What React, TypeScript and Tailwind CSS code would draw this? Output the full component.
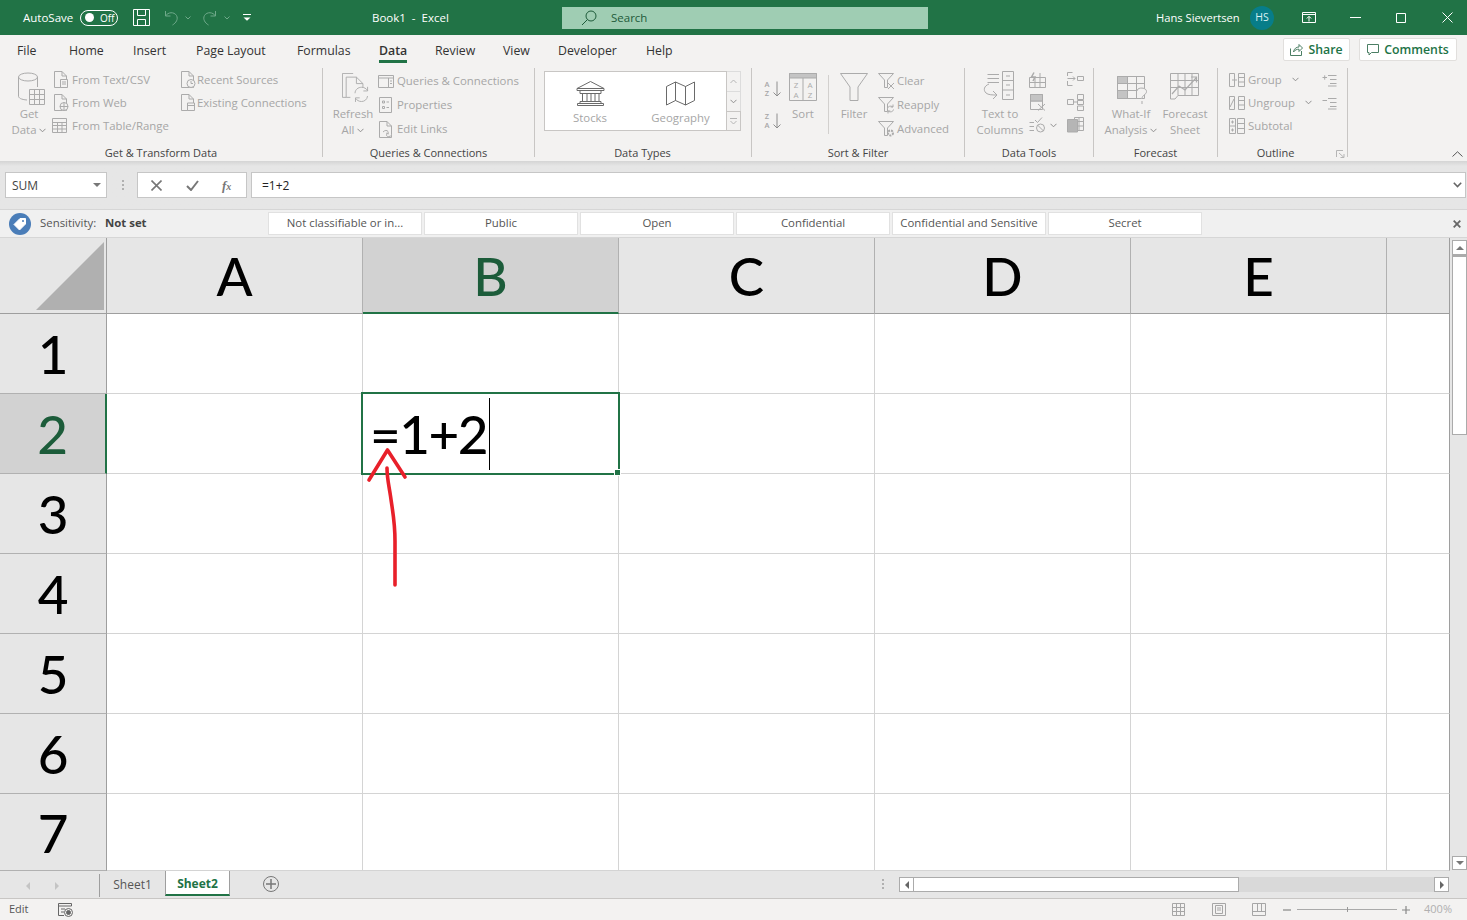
import type { ReactNode } from "react";

const columns = ["A", "B", "C", "D", "E"];
const rows = [1, 2, 3, 4, 5, 6, 7];
const sensitivity = ["Not classifiable or in...", "Public", "Open", "Confidential", "Confidential and Sensitive", "Secret"];
const tabs = [
  { name: "File", w: "w-[52px]" },
  { name: "Home", w: "w-[64px]" },
  { name: "Insert", w: "w-[63px]" },
  { name: "Page Layout", w: "w-[101px]" },
  { name: "Formulas", w: "w-[82px]" },
  { name: "Data", w: "w-[56px]", active: true },
  { name: "Review", w: "w-[68px]" },
  { name: "View", w: "w-[55px]" },
  { name: "Developer", w: "w-[88px]" },
  { name: "Help", w: "w-[50px]" },
];

function Svg({ w, h, className = "", children }: { w: number; h: number; className?: string; children: ReactNode }) {
  return (
    <svg width={w} height={h} viewBox={`0 0 ${w} ${h}`} fill="none" stroke="currentColor" strokeWidth="1" className={`shrink-0 ${className}`}>
      {children}
    </svg>
  );
}

const page = "M1.5 .5H9L13.5 5V16.5H1.5ZM9 .5V5H13.5";

function DocIcon({ children }: { children?: ReactNode }) {
  return (
    <Svg w={17} h={17}>
      <path d={page} />
      {children}
    </Svg>
  );
}

function FunnelSmall({ children }: { children?: ReactNode }) {
  return (
    <Svg w={18} h={18}>
      <path d="M.5 1.5H15.5L9.5 8V15.5H6.5V8Z" />
      {children}
    </Svg>
  );
}

function Big({ w, label, sub, chevron, children }: { w: string; label: string; sub?: string; chevron?: boolean; children: ReactNode }) {
  return (
    <div className={`${w} shrink-0 flex flex-col items-center text-[#a6a6a6]`}>
      <div className="h-[38px] w-full flex items-end justify-center text-[#ababab]">{children}</div>
      <div className="text-[11.4px] leading-[16px] whitespace-nowrap">{label}</div>
      {sub && (
        <div className="text-[11.4px] leading-[16px] whitespace-nowrap flex items-center gap-[3px]">
          {sub}
          {chevron && <Chevron />}
        </div>
      )}
    </div>
  );
}

function Chevron() {
  return (
    <Svg w={7} h={5} className="text-[#8f8f8f]">
      <path d="M.5 .8L3.5 3.8L6.5 .8" />
    </Svg>
  );
}

function Small({ icon, label, h, iconW = "w-[19px]" }: { icon: ReactNode; label: string; h: string; iconW?: string }) {
  return (
    <div className={`${h} flex items-center text-[#a6a6a6] whitespace-nowrap`}>
      <div className={`${iconW} shrink-0 text-[#ababab]`}>{icon}</div>
      <span className="text-[11.4px]">{label}</span>
    </div>
  );
}

function Group({ w, label, labelPad = "", children }: { w: string; label: string; labelPad?: string; children: ReactNode }) {
  return (
    <div className={`${w} h-[89px] shrink-0 border-r border-[#c8c6c4]`}>
      <div className="h-[77px] flex">{children}</div>
      <div className={`h-[12px] text-center text-[11px] leading-[16px] text-[#444] whitespace-nowrap ${labelPad}`}>{label}</div>
    </div>
  );
}

function TitleBar() {
  return (
    <div className="h-[35px] shrink-0 bg-[#217346] text-white flex items-center">
      <span className="ml-[23px] w-[57px] text-[11.5px]">AutoSave</span>
      <div className="w-[38px] h-[16px] rounded-full border border-white flex items-center pl-[4px]">
        <div className="w-[9px] h-[9px] rounded-full bg-white" />
        <span className="ml-[6px] text-[10px] leading-none">Off</span>
      </div>
      <Svg w={17} h={17} className="ml-[15px]">
        <path d="M.5 .5H16.5V16.5H.5ZM4.5 .5V6.5H12.5V.5M4.5 16.5V10.5H12.5V16.5" />
      </Svg>
      <Svg w={16} h={16} className="ml-[13px] text-[#6fa98a]">
        <path d="M2.5 1V6H7.5M2.5 6C5 2 11 1.5 13.5 5.5C15.5 9 13 13 9.5 15" />
      </Svg>
      <Svg w={6} h={4} className="ml-[6px] text-[#6fa98a]">
        <path d="M.5 .5L3 3L5.5 .5" />
      </Svg>
      <Svg w={16} h={16} className="ml-[11px] text-[#6fa98a]">
        <path d="M13.5 1V6H8.5M13.5 6C11 2 5 1.5 2.5 5.5C.5 9 3 13 6.5 15" />
      </Svg>
      <Svg w={6} h={4} className="ml-[6px] text-[#6fa98a]">
        <path d="M.5 .5L3 3L5.5 .5" />
      </Svg>
      <Svg w={8} h={7} className="ml-[13px]">
        <path d="M0 .5H8" />
        <path d="M.5 3.5H7.5L4 6.8Z" fill="currentColor" stroke="none" />
      </Svg>
      <span className="ml-[121px] w-[190px] text-[11.5px] whitespace-pre">Book1  -  Excel</span>
      <div className="w-[366px] h-[22px] bg-[#9fcdb3] text-[#1e5b3a] flex items-center pl-[19px]">
        <Svg w={16} h={16}>
          <circle cx="10" cy="6" r="5" />
          <path d="M6.5 9.5L1 15" />
        </Svg>
        <span className="ml-[14px] text-[11.5px]">Search</span>
      </div>
      <span className="ml-[228px] w-[94px] text-[11.2px] whitespace-nowrap pt-[2px]">Hans Sievertsen</span>
      <div className="w-[24px] h-[24px] rounded-full bg-[#077d89] flex items-center justify-center text-[10.5px] text-[#d9f1f3]">HS</div>
      <Svg w={14} h={11} className="ml-[28px]">
        <path d="M.5 .5H13.5V10.5H.5ZM.5 2.5H13.5M7 9.5V4.5M4.8 6.5L7 4.3L9.2 6.5" />
      </Svg>
      <Svg w={11} h={1} className="ml-[34px]">
        <path d="M0 .5H11" />
      </Svg>
      <Svg w={10} h={10} className="ml-[35px]">
        <path d="M.5 .5H9.5V9.5H.5Z" />
      </Svg>
      <Svg w={11} h={11} className="ml-[36px]">
        <path d="M.5 .5L10.5 10.5M10.5 .5L.5 10.5" />
      </Svg>
    </div>
  );
}

function TabRow() {
  return (
    <div className="h-[31px] shrink-0 bg-[#f3f2f1] flex items-start pl-[17px]">
      {tabs.map((t) => (
        <div key={t.name} className={`${t.w} shrink-0`}>
          <span
            className={`inline-block h-[28px] pt-[6px] leading-[20px] text-[12.3px] whitespace-nowrap border-b-[3px] ${
              t.active ? "border-[#217346] font-semibold text-[#333]" : "border-transparent text-[#333]"
            }`}
          >
            {t.name}
          </span>
        </div>
      ))}
      <div className="ml-auto mr-[10px] mt-[3px] flex gap-[9px]">
        <button className="w-[67px] h-[23px] bg-white border border-[#e1dfdd] rounded-[2px] flex items-center justify-center gap-[5px] text-[#217346] text-[12.3px] font-semibold">
          <Svg w={13} h={13} className="text-[#4b7f64]">
            <path d="M.5 5.5V12.5H11.5V8M3.5 9C4 5.5 6.5 4 9 4V1.5L12.5 5L9 8.5V6.2C7 6.2 5 6.8 3.5 9Z" />
          </Svg>
          <span className="pt-[2px]">Share</span>
        </button>
        <button className="w-[98px] h-[23px] bg-white border border-[#e1dfdd] rounded-[2px] flex items-center justify-center gap-[5px] text-[#217346] text-[12.3px] font-semibold">
          <Svg w={12} h={12} className="text-[#4b7f64]">
            <path d="M.5 .5H11.5V8.5H4.5L2 11V8.5H.5Z" />
          </Svg>
          <span className="pt-[2px]">Comments</span>
        </button>
      </div>
    </div>
  );
}

function Ribbon() {
  return (
    <div className="h-[95px] shrink-0 bg-[#f3f2f1] pt-[2px] flex relative">
      <Group w="w-[323px]" label="Get & Transform Data">
        <div className="ml-[10px] w-[38px]">
          <Big w="w-[38px]" label="Get" sub="Data" chevron>
            <Svg w={28} h={34} className="ml-[6px]">
              <ellipse cx="10" cy="5" rx="9.5" ry="4" />
              <path d="M.5 5V24C.5 26 3 27.5 9 28M19.5 5V15" />
              <path d="M11.5 17.5H26.5V32.5H11.5ZM11.5 22.5H26.5M11.5 27.5H26.5M16.5 17.5V32.5M21.5 17.5V32.5" />
            </Svg>
          </Big>
        </div>
        <div className="ml-[5px] w-[127px]">
          <Small
            h="h-[23px]"
            label="From Text/CSV"
            icon={
              <DocIcon>
                <path d="M7.5 8.5H14.5V16.5H7.5ZM9 11H13M9 13H13" fill="#f3f2f1" />
              </DocIcon>
            }
          />
          <Small
            h="h-[23px]"
            label="From Web"
            icon={
              <DocIcon>
                <circle cx="11" cy="12.5" r="4" fill="#f3f2f1" />
                <path d="M7 12.5H15M11 8.5V16.5" />
              </DocIcon>
            }
          />
          <Small
            h="h-[23px]"
            label="From Table/Range"
            icon={
              <Svg w={15} h={15} className="ml-[-1px]">
                <path d="M.5 .5H14.5V14.5H.5ZM.5 4.5H14.5M.5 7.5H14.5M.5 11H14.5M5.5 4.5V14.5M10 4.5V14.5" />
              </Svg>
            }
          />
        </div>
        <div>
          <Small
            h="h-[23px]"
            iconW="w-[17px]"
            label="Recent Sources"
            icon={
              <DocIcon>
                <circle cx="11" cy="12.5" r="4" fill="#f3f2f1" />
                <path d="M11 10V12.5H13" />
              </DocIcon>
            }
          />
          <Small
            h="h-[23px]"
            iconW="w-[17px]"
            label="Existing Connections"
            icon={
              <DocIcon>
                <path d="M7.5 9H14.5V16.5H7.5ZM7.5 11.5H14.5" fill="#f3f2f1" />
              </DocIcon>
            }
          />
        </div>
      </Group>

      <Group w="w-[212px]" label="Queries & Connections">
        <div className="ml-[5px] w-[50px]">
          <Big w="w-[50px]" label="Refresh" sub="All" chevron>
            <Svg w={28} h={30} className="mb-[3px] ml-[6px]">
              <g transform="scale(.93 .92)">
                <path d="M4.5 26.5H.5V.5H12" />
                <path d="M4.5 4.5H15.5L22.5 11.5V16M15.5 4.5V11.5H22.5M4.5 4.5V26.5H9" />
                <path d="M14 22C14 18 17.5 15.5 21 15.5C24 15.5 26 17 27.5 19M27.5 15V19.5H23M27.5 25C27 29 24 31 21 31C18 31 16 29.5 14.5 27.5M14.5 31.5V27H19" />
              </g>
            </Svg>
          </Big>
        </div>
        <div className="pt-[1px]">
          <Small
            h="h-[24px]"
            label="Queries & Connections"
            icon={
              <Svg w={16} h={13}>
                <path d="M.5 .5H15.5V12.5H.5ZM.5 3H15.5M10.5 3V12.5M12 6H14M12 8.5H14" />
              </Svg>
            }
          />
          <Small
            h="h-[24px]"
            label="Properties"
            icon={
              <Svg w={13} h={16} className="ml-[1px]">
                <path d="M.5 .5H12.5V15.5H.5ZM3.5 4H5.5V6H3.5ZM3.5 9.5H5.5V11.5H3.5ZM7.5 5H10M7.5 10.5H10" />
              </Svg>
            }
          />
          <Small
            h="h-[24px]"
            label="Edit Links"
            icon={
              <DocIcon>
                <path d="M5 11C7 9 9 9 10 10.5C11 12 9 13 8 12M14 14C12 16 9 16 8.5 14.5C8 13 10 12 11 13" fill="#f3f2f1" />
              </DocIcon>
            }
          />
        </div>
      </Group>

      <Group w="w-[217px]" label="Data Types" labelPad="pr-[1px]">
        <div className="ml-[9px] mt-[3px] h-[60px] flex">
          <div className="w-[183px] h-[60px] bg-white border border-[#c8c6c4] flex text-[#a6a6a6]">
            <div className="w-[90px] flex flex-col items-center pt-[9px]">
              <Svg w={29} h={25} className="text-[#6a6a6a]">
                <path d="M14.5 .5L28 7.5H1ZM1 7.5V9.5H28V7.5M4 12.5H25M4 9.5V12.5M25 9.5V12.5M6.5 12.5V20.5M11 12.5V20.5M15 12.5V20.5M19 12.5V20.5M23 12.5V20.5M4 20.5H25V22.5H4ZM1.5 22.5H27.5V24.5H1.5Z" />
              </Svg>
              <span className="mt-[4px] text-[11.4px] leading-[16px]">Stocks</span>
            </div>
            <div className="flex-1 flex flex-col items-center pt-[9px]">
              <Svg w={29} h={25} className="text-[#6a6a6a]">
                <path d="M.5 5.5L9.5 1V19.5L.5 24ZM9.5 1L19.5 5.5V24L9.5 19.5ZM19.5 5.5L28.5 1V19.5L19.5 24Z" />
              </Svg>
              <span className="mt-[4px] text-[11.4px] leading-[16px]">Geography</span>
            </div>
          </div>
          <div className="w-[14px] h-[60px] flex flex-col text-[#b5b5b5]">
            <div className="h-[21px] border border-l-0 border-[#dcdcdc] flex items-center justify-center">
              <Svg w={7} h={5}>
                <path d="M.5 4L3.5 1L6.5 4" />
              </Svg>
            </div>
            <div className="h-[19px] border-r border-[#dcdcdc] flex items-center justify-center">
              <Chevron />
            </div>
            <div className="h-[20px] border border-l-0 border-[#c8c6c4] flex items-center justify-center">
              <Svg w={7} h={7}>
                <path d="M0 .5H7M.5 3L3.5 6L6.5 3" />
              </Svg>
            </div>
          </div>
        </div>
      </Group>

      <Group w="w-[213px]" label="Sort & Filter">
        <div className="ml-[11px] w-[26px] pt-[12px] flex flex-col gap-[15px] text-[#a6a6a6]">
          {[["A", "Z"], ["Z", "A"]].map(([top, bottom]) => (
            <div key={top} className="flex items-center gap-[2px] h-[17px]">
              <div className="w-[8px] text-[7.5px] leading-[9px] font-semibold text-center">
                <div>{top}</div>
                <div>{bottom}</div>
              </div>
              <Svg w={8} h={16} className="text-[#8e8e8e]">
                <path d="M4 .5V15M.5 11.5L4 15L7.5 11.5" />
              </Svg>
            </div>
          ))}
        </div>
        <div className="w-[28px]">
          <Big w="w-[28px]" label="Sort">
            <Svg w={28} h={28} className="mb-[5px]">
              <path d="M.5 .5H27.5V27.5H.5ZM14 5V27.5" />
              <path d="M.5 .5H27.5V5H.5Z" fill="#c4c4c4" />
              <text x="7" y="14.5" fontSize="8" textAnchor="middle" fill="currentColor" stroke="none">Z</text>
              <text x="7" y="25" fontSize="8" textAnchor="middle" fill="currentColor" stroke="none">A</text>
              <text x="21" y="14.5" fontSize="8" textAnchor="middle" fill="currentColor" stroke="none">A</text>
              <text x="21" y="25" fontSize="8" textAnchor="middle" fill="currentColor" stroke="none">Z</text>
            </Svg>
          </Big>
        </div>
        <div className="ml-[11px] mt-[7px] h-[59px] border-l border-[#d2d0ce]" />
        <div className="ml-[11px] w-[28px]">
          <Big w="w-[28px]" label="Filter">
            <Svg w={28} h={28} className="mb-[5px]">
              <path d="M.5 .5H27.5L18 14V27.5H10V14Z" />
            </Svg>
          </Big>
        </div>
        <div className="ml-[10px] pt-[1px]">
          <Small
            h="h-[24px]"
            label="Clear"
            icon={
              <FunnelSmall>
                <path d="M10 11L16 17M16 11L10 17" />
              </FunnelSmall>
            }
          />
          <Small
            h="h-[24px]"
            label="Reapply"
            icon={
              <FunnelSmall>
                <path d="M9.5 12.5C9.8 10.5 12.5 9.2 15 11M15 8.5V11H12.7M15.5 13.5C15.2 15.5 12.5 16.8 10 15M10 17.5V15H12.3" fill="#f3f2f1" />
              </FunnelSmall>
            }
          />
          <Small
            h="h-[24px]"
            label="Advanced"
            icon={
              <FunnelSmall>
                <circle cx="12.5" cy="13" r="2.5" fill="#f3f2f1" strokeWidth="2" strokeDasharray="2 1" />
              </FunnelSmall>
            }
          />
        </div>
      </Group>

      <Group w="w-[129px]" label="Data Tools">
        <div className="ml-[9px] w-[52px]">
          <Big w="w-[52px]" label="Text to" sub="Columns">
            <Svg w={31} h={29} className="mb-[6px] mr-[3px]">
              <path d="M4.5 3.5H16M4.5 7.5H16M4.5 11.5H16" />
              <path d="M19.5 .5H30.5V28.5H19.5ZM19.5 9.5H30.5M19.5 19H30.5M23 5H27M23 14H27M23 24H27" />
              <path d="M6 13C1 15 0 19 3 22C5 24 10 24 14 24M10 20L14 24L10 28" />
            </Svg>
          </Big>
        </div>
        <div className="ml-[3px] pt-[4px] flex flex-col gap-[6px] text-[#ababab]">
          <Svg w={17} h={16}>
            <path d="M.5 5.5H16.5V15.5H.5ZM.5 10.5H16.5M6 5.5V15.5M11 1V15.5" />
            <path d="M5 .5L2.5 5H6L4 9" strokeWidth="1.5" />
          </Svg>
          <Svg w={17} h={17}>
            <path d="M1.5 .5H13.5V15.5H1.5ZM1.5 7H13.5" />
            <path d="M1.5 .5H13.5V7H1.5Z" fill="#c4c4c4" />
            <path d="M9 10L16 16.5M16 10L9 16.5" fill="none" />
          </Svg>
          <div className="flex items-center">
            <Svg w={17} h={16}>
              <path d="M.5 5.5H5M.5 9.5H5M.5 13.5H5M6 3L8.5 5.5L13 .5" />
              <circle cx="11.5" cy="11" r="4" />
              <path d="M8.5 8L14.5 14" />
            </Svg>
            <Svg w={7} h={5} className="ml-[4px] text-[#8f8f8f]">
              <path d="M.5 .8L3.5 3.8L6.5 .8" />
            </Svg>
          </div>
        </div>
        <div className="ml-[10px] pt-[4px] flex flex-col gap-[6px] text-[#ababab]">
          <Svg w={17} h={16}>
            <path d="M5.5 .5H.5V4M.5 9V13.5H5.5M.5 6.5H8M6 4.5L8 6.5L6 8.5M10.5 4.5H16.5V8.5H10.5Z" />
          </Svg>
          <Svg w={17} h={17}>
            <path d="M.5 5.5H6.5V10.5H.5ZM10.5 .5H16.5V5.5H10.5ZM10.5 6.5H16.5V10.5H10.5ZM10.5 12H16.5V16.5H10.5ZM6.5 8H10.5" />
          </Svg>
          <Svg w={17} h={16}>
            <path d="M7.5 .5H16.5V13.5H7.5ZM7.5 4.5H16.5M7.5 9H16.5M12 .5V13.5" />
            <path d="M.5 2.5H10.5V15H.5Z" fill="#b5b5b5" />
          </Svg>
        </div>
      </Group>

      <Group w="w-[124px]" label="Forecast">
        <div className="ml-[7px] w-[60px]">
          <Big w="w-[60px]" label="What-If" sub="Analysis" chevron>
            <Svg w={31} h={30} className="ml-[2px]">
              <path d="M.5 .5H10.5V7.5H.5Z" fill="#c4c4c4" />
              <path d="M.5 14.5H10.5V22.5H.5Z" fill="#c4c4c4" />
              <path d="M.5 .5H27.5V22.5H.5ZM.5 7.5H27.5M.5 14.5H20M10.5 .5V22.5M19.5 .5V22.5" />
              <path d="M20 15C20 11 29.5 11 29.5 15.5C29.5 19 25 18.5 25 23M25 25V28" fill="#f3f2f1" />
            </Svg>
          </Big>
        </div>
        <div className="w-[48px]">
          <Big w="w-[48px]" label="Forecast" sub="Sheet">
            <Svg w={30} h={27} className="mb-[6px]">
              <path d="M.5 .5H28.5V22.5H8L5 26H.5ZM.5 7.5H28.5M.5 14.5H28.5M8 .5V22.5M15 .5V22.5M22 .5V22.5" />
              <path d="M2 21L9 13L15 17L26 5M21 4H26.5V9.5" strokeWidth="1.2" />
            </Svg>
          </Big>
        </div>
      </Group>

      <Group w="w-[130px]" label="Outline" labelPad="pr-[14px]">
        <div className="ml-[11px] w-[93px]">
          <div className="flex items-center">
            <Small
              h="h-[23px]"
              label="Group"
              icon={
                <Svg w={16} h={14}>
                  <path d="M5.5 .5H.5V13.5H5.5M3 7H8M5.5 .5V13.5M9.5 .5H15.5V13.5H9.5ZM9.5 4.5H15.5M9.5 9H15.5" />
                </Svg>
              }
            />
            <Svg w={7} h={5} className="ml-[10px] text-[#8f8f8f]">
              <path d="M.5 .8L3.5 3.8L6.5 .8" />
            </Svg>
          </div>
          <div className="flex items-center">
            <Small
              h="h-[23px]"
              label="Ungroup"
              icon={
                <Svg w={16} h={14}>
                  <path d="M5.5 .5H.5V13.5H5.5V.5M1 11L5 3M9.5 .5H15.5V13.5H9.5ZM9.5 4.5H15.5M9.5 9H15.5" />
                </Svg>
              }
            />
            <Svg w={7} h={5} className="ml-[10px] text-[#8f8f8f]">
              <path d="M.5 .8L3.5 3.8L6.5 .8" />
            </Svg>
          </div>
          <Small
            h="h-[23px]"
            label="Subtotal"
            icon={
              <Svg w={16} h={16}>
                <path d="M.5 .5H6.5V15.5H.5ZM.5 8H6.5M8.5 .5H15.5V15.5H8.5ZM8.5 5.5H15.5M8.5 10.5H15.5M2 4H5M3.5 2.5V5.5M2 12H5M3.5 10.5V13.5" />
              </Svg>
            }
          />
        </div>
        <div className="pt-[5px] flex flex-col gap-[9px] text-[#ababab]">
          <Svg w={15} h={14}>
            <path d="M6 2.5H14.5M8 6.5H14.5M8 10.5H14.5M6 13H14.5M.5 4.5H5M2.7 2.3V6.7" />
          </Svg>
          <Svg w={15} h={14}>
            <path d="M6 2.5H14.5M8 6.5H14.5M8 10.5H14.5M6 13H14.5M.5 4.5H5" />
          </Svg>
        </div>
        <div className="flex-1" />
      </Group>

      {/* corner launcher and ribbon collapse chevron */}
      <Svg w={9} h={8} className="absolute left-[1336px] top-[84px] text-[#b5b5b5]">
        <path d="M.5 7V.5H7M3 3L8 7.5M8 4V7.5H4.5" />
      </Svg>
      <Svg w={11} h={6} className="absolute left-[1452px] top-[85px] text-[#555]">
        <path d="M.5 5.5L5.5 .8L10.5 5.5" />
      </Svg>
    </div>
  );
}

function FormulaBar() {
  return (
    <div className="h-[48px] shrink-0 bg-[#e6e6e6] bg-gradient-to-b from-[#d4d4d4] to-[#e6e6e6] to-[5px] pt-[11px] flex items-start text-[#444]">
      <div className="ml-[5px] w-[102px] h-[26px] bg-white border border-[#c6c6c6] flex items-center pl-[6px] text-[12px]">
        <span className="pt-[2px]">SUM</span>
        <span className="ml-auto mr-[5px] w-0 h-0 border-x-[4px] border-t-[4px] border-x-transparent border-t-[#777]" />
      </div>
      <div className="ml-[14px] w-[3px] h-[26px] flex flex-col gap-[2px] justify-center items-center">
        <span className="w-[2px] h-[2px] bg-[#b0b0b0]" />
        <span className="w-[2px] h-[2px] bg-[#b0b0b0]" />
        <span className="w-[2px] h-[2px] bg-[#b0b0b0]" />
      </div>
      <div className="ml-[13px] w-[110px] h-[26px] bg-white border border-[#c6c6c6] flex items-center text-[#777]">
        <Svg w={11} h={11} className="ml-[13px]">
          <path d="M.5 .5L10.5 10.5M10.5 .5L.5 10.5" strokeWidth="1.6" />
        </Svg>
        <Svg w={13} h={11} className="ml-[24px]">
          <path d="M1 6L5 10L12 1" strokeWidth="2" />
        </Svg>
        <span className="ml-[23px] font-['Liberation_Serif',serif] italic text-[13px] font-bold leading-none">
          f<span className="text-[10px]">x</span>
        </span>
      </div>
      <div className="ml-[4px] w-[1215px] h-[26px] bg-white border border-[#c6c6c6] flex items-center pl-[10px] text-[12px] text-[#222]">
        <span className="pt-[2px]">=1+2</span>
        <Svg w={9} h={6} className="ml-auto mr-[3px] text-[#666]">
          <path d="M.8 .8L4.5 4.5L8.2 .8" strokeWidth="1.6" />
        </Svg>
      </div>
    </div>
  );
}

function SensitivityBar() {
  return (
    <div className="h-[29px] shrink-0 bg-[#f0f0f0] border-y border-[#d6d6d6] flex items-center text-[#555] text-[11.4px]">
      <div className="ml-[9px] w-[22px] h-[22px] rounded-full bg-[#4a7db8] flex items-center justify-center">
        <Svg w={14} h={14} className="text-white">
          <path d="M7 1.5H12.5V7L6.5 13L1 7.5Z" fill="currentColor" />
          <circle cx="10" cy="4" r="1" fill="#4a7db8" stroke="none" />
        </Svg>
      </div>
      <span className="ml-[9px] w-[65px] pb-[2px]">Sensitivity:</span>
      <span className="w-[163px] pb-[2px] font-bold text-[#444]">Not set</span>
      <div className="flex gap-[2px]">
        {sensitivity.map((s) => (
          <div key={s} className="w-[154px] h-[23px] pb-[2px] bg-white border border-[#e1e1e1] flex items-center justify-center whitespace-nowrap">
            {s}
          </div>
        ))}
      </div>
      <Svg w={8} h={8} className="ml-auto mr-[6px] text-[#666]">
        <path d="M.7 .7L7.3 7.3M7.3 .7L.7 7.3" strokeWidth="1.8" />
      </Svg>
    </div>
  );
}

function Cell({ col, row }: { col: number; row: number }) {
  const selected = col === 1 && row === 2;
  const last = col === 5;
  return (
    <div className={`relative border-b border-r ${last ? "border-b-[#d4d4d4] border-r-[#9e9e9e]" : "border-[#d4d4d4]"}`}>
      {selected && (
        <div className="absolute left-[-2px] top-[-2px] w-[259px] h-[83px] border-2 border-[#217346] flex items-center pl-[7px] font-['Lato',sans-serif] font-medium text-[53px] text-black z-10">
          <span className="tracking-[-1.5px]">=1+2</span>
          <span className="ml-[2px] w-[1px] h-[72px] bg-black" />
          <span className="absolute right-[-3px] bottom-[-3px] w-[5px] h-[5px] bg-[#217346] border border-white box-content" />
        </div>
      )}
    </div>
  );
}

function Sheet() {
  return (
    <div className="h-[633px] shrink-0 flex bg-white relative overflow-hidden">
      <div className="grid grid-cols-[107px_repeat(5,256px)_63px] grid-rows-[76px_repeat(6,80px)_77px] font-['Lato',sans-serif] font-medium text-[53px] leading-none text-black">
        <div className="bg-[#e6e6e6] border-r border-b border-[#9e9e9e] flex items-end justify-end pr-[2px] pb-[3px]">
          <svg width="68" height="68" viewBox="0 0 68 68">
            <path d="M0 68L68 0V68Z" fill="#b0b0b0" />
          </svg>
        </div>
        {columns.map((c) => (
          <div
            key={c}
            className={`flex items-center justify-center border-r border-r-[#b1b1b1] ${
              c === "B" ? "bg-[#d2d2d2] text-[#1c5c3a] border-b-2 border-b-[#217346]" : "bg-[#e6e6e6] border-b border-b-[#9e9e9e]"
            }`}
          >
            {c}
          </div>
        ))}
        <div className="bg-[#e6e6e6] border-b border-r border-b-[#9e9e9e] border-r-[#9e9e9e]" />
        {rows.map((r) => [
          <div
            key={`h${r}`}
            className={`flex items-center justify-center border-b border-b-[#b1b1b1] ${
              r === 2 ? "bg-[#d2d2d2] text-[#1c5c3a] border-r-2 border-r-[#217346]" : "bg-[#e6e6e6] border-r border-r-[#9e9e9e]"
            }`}
          >
            {r}
          </div>,
          ...[0, 1, 2, 3, 4, 5].map((c) => <Cell key={`${c}-${r}`} col={c} row={r} />),
        ])}
      </div>

      {/* vertical scrollbar */}
      <div className="w-[17px] bg-[#e6e6e6] pl-[2px] pt-[2px] pb-[1px] flex flex-col">
        <div className="w-[15px] h-[15px] bg-white border border-[#ababab] flex items-center justify-center">
          <span className="w-0 h-0 border-x-[4px] border-b-[4px] border-x-transparent border-b-[#777]" />
        </div>
        <div className="w-[15px] h-[180px] bg-white border border-t-2 border-[#ababab]" />
        <div className="flex-1" />
        <div className="w-[15px] h-[14px] bg-white border border-[#ababab] flex items-center justify-center">
          <span className="w-0 h-0 border-x-[4px] border-t-[4px] border-x-transparent border-t-[#777]" />
        </div>
      </div>

      {/* red hand drawn arrow on the screenshot */}
      <svg width="60" height="150" viewBox="0 0 60 150" fill="none" className="absolute left-[360px] top-[208px] z-20">
        <path d="M9 34L27.5 4L45 31" stroke="#e8202a" strokeWidth="3.6" strokeLinecap="round" strokeLinejoin="round" />
        <path d="M27 22C27 32 29 40 30.5 50C33 68 35 76 35 95V139" stroke="#e8202a" strokeWidth="3.6" strokeLinecap="round" />
      </svg>
    </div>
  );
}

function SheetTabs() {
  return (
    <div className="h-[27px] shrink-0 bg-[#e6e6e6] flex items-start relative text-[12px]">
      <div className="w-[100px] h-[23px] mt-[3px] border-r border-[#9e9e9e] flex items-center pl-[26px] gap-[25px]">
        <span className="w-0 h-0 border-y-[4px] border-r-[4px] border-y-transparent border-r-[#c4c4c4]" />
        <span className="w-0 h-0 border-y-[4px] border-l-[4px] border-y-transparent border-l-[#c4c4c4]" />
      </div>
      <div className="w-[65px] h-[25px] pt-[2px] flex items-center justify-center text-[#555]">Sheet1</div>
      <div className="w-[65px] h-[25px] pt-[2px] bg-white border-x border-[#9e9e9e] border-b-[2px] border-b-[#217346] flex items-center justify-center font-bold text-[#217346]">
        Sheet2
      </div>
      <div className="ml-[33px] mt-[5px] w-[16px] h-[16px] rounded-full border border-[#777] flex items-center justify-center text-[#777]">
        <Svg w={10} h={10}>
          <path d="M5 0V10M0 5H10" strokeWidth="1.5" />
        </Svg>
      </div>
      <div className="ml-[603px] mt-[8px] h-[10px] flex flex-col justify-between">
        <span className="w-[2px] h-[2px] bg-[#b0b0b0]" />
        <span className="w-[2px] h-[2px] bg-[#b0b0b0]" />
        <span className="w-[2px] h-[2px] bg-[#b0b0b0]" />
      </div>
      <div className="ml-[15px] mt-[6px] w-[550px] h-[15px] bg-[#d9d9d9] flex">
        <div className="w-[15px] bg-white border border-[#ababab] flex items-center justify-center">
          <span className="w-0 h-0 border-y-[4px] border-r-[4px] border-y-transparent border-r-[#666]" />
        </div>
        <div className="w-[325px] bg-white border border-l-0 border-[#ababab]" />
        <div className="flex-1" />
        <div className="w-[15px] bg-white border border-[#ababab] flex items-center justify-center">
          <span className="w-0 h-0 border-y-[4px] border-l-[4px] border-y-transparent border-l-[#666]" />
        </div>
      </div>
    </div>
  );
}

function StatusBar() {
  return (
    <div className="h-[22px] shrink-0 bg-[#f3f2f1] border-t border-[#c8c6c4] flex items-center text-[11px] text-[#555]">
      <span className="ml-[9px] w-[49px]">Edit</span>
      <Svg w={15} h={14} className="text-[#666]">
        <path d="M.5 .5H13.5V3H.5ZM.5 3V12.5H6M3 6H7M3 9H6" />
        <circle cx="10.5" cy="9.5" r="4" />
        <circle cx="10.5" cy="9.5" r="2" fill="currentColor" />
      </Svg>
      <div className="ml-auto flex items-center text-[#a6a6a6]">
        <Svg w={13} h={13}>
          <path d="M.5 .5H12.5V12.5H.5ZM.5 4.5H12.5M.5 8.5H12.5M4.5 .5V12.5M8.5 .5V12.5" />
        </Svg>
        <Svg w={14} h={13} className="ml-[27px]">
          <path d="M.5 .5H13.5V12.5H.5ZM3.5 2.5H10.5V10.5H3.5ZM5 5H9M5 7H9" />
        </Svg>
        <Svg w={14} h={13} className="ml-[26px]">
          <path d="M.5 .5H13.5V12.5H.5ZM.5 8.5H13.5M5.5 .5V8.5M9.5 .5V8.5" />
        </Svg>
        <Svg w={8} h={2} className="ml-[17px] text-[#888]">
          <path d="M0 1H8" strokeWidth="1.2" />
        </Svg>
        <div className="ml-[6px] w-[100px] h-[1px] bg-[#aaa] flex justify-center items-center">
          <span className="w-[1px] h-[5px] bg-[#999]" />
        </div>
        <Svg w={8} h={8} className="ml-[5px] text-[#888]">
          <path d="M0 4H8M4 0V8" strokeWidth="1.2" />
        </Svg>
        <span className="ml-[14px] mr-[15px] text-[11px] text-[#b0b0b0]">400%</span>
      </div>
    </div>
  );
}

export default function App() {
  return (
    <div className="h-screen w-screen overflow-hidden flex flex-col bg-[#f3f2f1] font-['Open_Sans',sans-serif]">
      <TitleBar />
      <TabRow />
      <Ribbon />
      <FormulaBar />
      <SensitivityBar />
      <Sheet />
      <SheetTabs />
      <StatusBar />
    </div>
  );
}
